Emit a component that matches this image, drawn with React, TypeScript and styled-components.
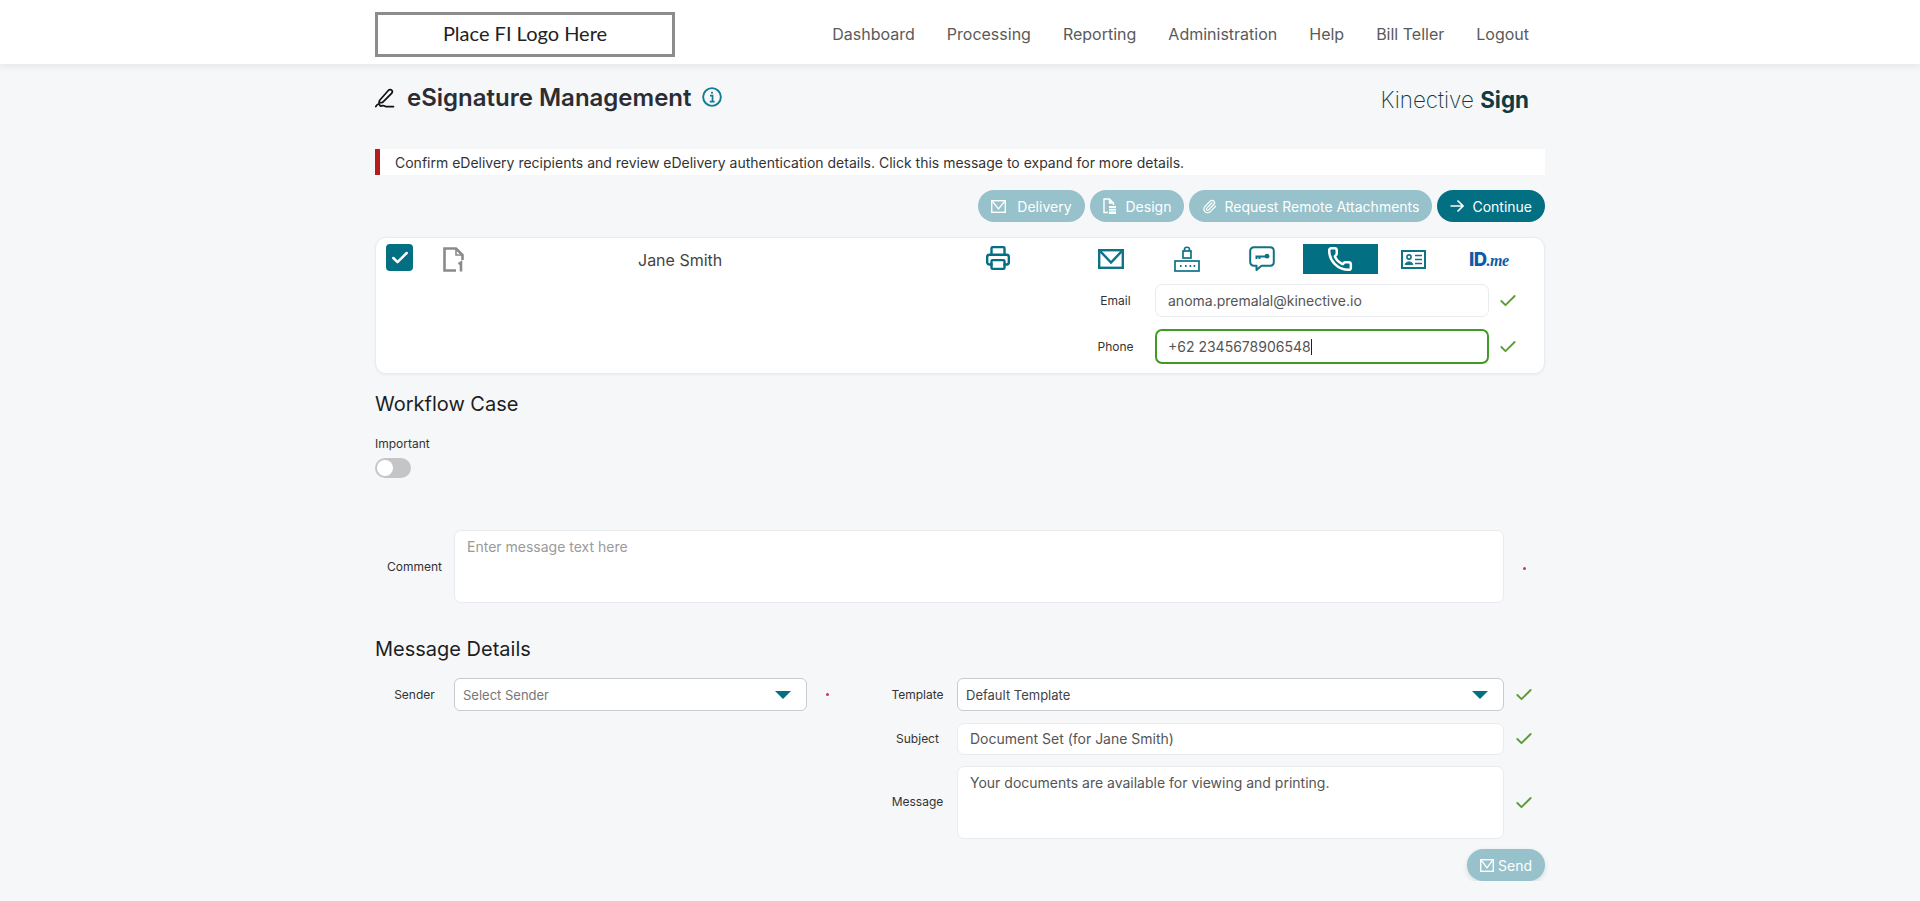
import React from "react";
import styled, { createGlobalStyle } from "styled-components";
import { Check, Paperclip, Phone, Printer } from "lucide-react";

const Global = createGlobalStyle`
  html, body { margin: 0; padding: 0; background: #f6f7f9; }
  body { font-family: Inter, "Liberation Sans", sans-serif; color: #333; overflow: hidden; }
  * { box-sizing: border-box; }
`;

const Header = styled.header`
  height: 64px;
  background: #fff;
  box-shadow: 0 2px 8px rgba(0, 0, 0, 0.08);
`;
const HeaderInner = styled.div`
  width: 1170px;
  height: 100%;
  margin: 0 auto;
  display: flex;
  align-items: center;
  justify-content: space-between;
  padding: 4px 16px 0 0;
`;
const LogoBox = styled.div`
  width: 300px;
  height: 45px;
  margin-top: 1px;
  padding-bottom: 3px;
  border: 3px solid #8c8c8c;
  display: flex;
  align-items: center;
  justify-content: center;
  font-family: Lato, Inter, sans-serif;
  font-size: 20px;
  color: #222;
`;
const Nav = styled.nav`
  display: flex;
  gap: 32px;
  font-size: 16px;
  color: #5a5a5a;
`;
const Main = styled.main`
  width: 1170px;
  margin: 0 auto;
`;
const TitleRow = styled.div`
  height: 32px;
  margin-top: 18px;
  display: flex;
  align-items: center;
  justify-content: space-between;
  padding-right: 16px;
`;
const TitleGroup = styled.div`
  display: flex;
  align-items: center;
`;
const Title = styled.h1`
  margin: 0 10px 0 12px;
  font-size: 24px;
  line-height: 32px;
  font-weight: 600;
  color: #2b2d33;
`;
const InfoSlot = styled.span`
  display: flex;
  margin-bottom: 3px;
`;
const Brand = styled.div`
  margin-top: 2px;
  font-size: 22.4px;
  font-weight: 200;
  color: #0f3b42;
  b { font-weight: 700; }
`;
const Alert = styled.div`
  height: 26px;
  margin-top: 35px;
  padding: 1px 0 0 15px;
  background: #fff;
  border-left: 5px solid #b71c1c;
  display: flex;
  align-items: center;
  font-size: 14px;
  color: #333;
`;
const Actions = styled.div`
  margin-top: 15px;
  display: flex;
  justify-content: flex-end;
  gap: 5px;
`;
const Pill = styled.button<{ $active?: boolean; $gap?: number }>`
  height: 32px;
  border: 0;
  border-radius: 16px;
  padding: 0 13px;
  display: flex;
  align-items: center;
  gap: ${(p) => p.$gap ?? 9}px;
  font-family: inherit;
  font-size: 14px;
  color: #fff;
  background: ${(p) => (p.$active ? "#026f83" : "#97c2cb")};
`;
const SendPill = styled(Pill)`
  box-shadow: 0 2px 5px rgba(0, 0, 0, 0.12);
`;
const Card = styled.section`
  margin-top: 15px;
  height: 137px;
  background: #fff;
  border: 1px solid #e9ebee;
  border-radius: 11px;
  box-shadow: 0 1px 3px rgba(0, 0, 0, 0.05);
  display: flex;
  padding: 6px 15px 0 10px;
`;
const CheckBox = styled.div`
  width: 27px;
  height: 27px;
  border-radius: 4px;
  background: #026f83;
  display: flex;
  align-items: center;
  justify-content: center;
  color: #fff;
`;
const DocSlot = styled.div`
  width: 21px;
  height: 25px;
  margin: 3px 174px 0 30px;
  flex: none;
`;
const Recipient = styled.div`
  width: 347px;
  flex: none;
  font-size: 16px;
  line-height: 32px;
  color: #444;
`;
const PrinterSlot = styled.div`
  width: 91px;
  flex: none;
  padding-top: 1px;
  color: #026f83;
`;
const Delivery = styled.div`
  width: 453px;
  flex: none;
`;
const Tabs = styled.div`
  display: grid;
  grid-template-columns: repeat(6, 1fr);
  height: 30px;
`;
const Tab = styled.div<{ $on?: boolean }>`
  display: flex;
  align-items: center;
  justify-content: center;
  padding-right: ${(p) => (p.$on ? 0 : 5)}px;
  color: ${(p) => (p.$on ? "#fff" : "#0f7386")};
  background: ${(p) => (p.$on ? "#026f83" : "transparent")};
`;
const IdMe = styled.div`
  color: #0b5ca8;
  font-size: 18.5px;
  font-weight: 800;
  letter-spacing: -0.5px;
  display: flex;
  align-items: baseline;
  i { font-family: "Liberation Serif", serif; font-weight: 700; font-size: 16px; }
`;
const DeliveryRow = styled.div<{ $top: number }>`
  display: grid;
  grid-template-columns: 79px 334px 38px;
  align-items: center;
  margin-top: ${(p) => p.$top}px;
`;
const Label = styled.div`
  font-size: 12px;
  line-height: 16px;
  text-align: center;
  color: #333;
`;
const Field = styled.div<{ $h?: number; $focus?: boolean }>`
  height: ${(p) => p.$h ?? 33}px;
  background: #fff;
  border: ${(p) => (p.$focus ? "2px solid #3f9b25" : "1px solid #e9ebee")};
  border-radius: 7px;
  padding: ${(p) => (p.$h && p.$h > 40 ? "7px 12px" : p.$focus ? "0 11px" : "0 12px")};
  display: ${(p) => (p.$h && p.$h > 40 ? "block" : "flex")};
  align-items: center;
  font-size: 14px;
  line-height: 18px;
  color: #555;
`;
const Caret = styled.span`
  display: inline-block;
  width: 1px;
  height: 16px;
  background: #222;
`;
const Placeholder = styled.span`
  color: #9a9a9a;
`;
const Mark = styled.div<{ $top?: number }>`
  display: flex;
  justify-content: center;
  margin-top: ${(p) => p.$top ?? 0}px;
  color: #5a9e2f;
`;
const Dot = styled.div<{ $top?: number }>`
  width: 3px;
  height: 3px;
  margin: ${(p) => p.$top ?? 0}px auto 0;
  border-radius: 50%;
  background: #d5324f;
`;
const SectionTitle = styled.h2<{ $top: number }>`
  margin: ${(p) => p.$top}px 0 0;
  font-size: 20px;
  line-height: 28px;
  font-weight: 400;
  color: #1c1e22;
`;
const ToggleLabel = styled.div`
  margin-top: 18px;
  font-size: 12px;
  line-height: 16px;
  color: #333;
`;
const Toggle = styled.div`
  width: 36px;
  height: 20px;
  margin-top: 6px;
  padding: 2px;
  border-radius: 10px;
  background: #c4c5c7;
  &::before {
    content: "";
    display: block;
    width: 16px;
    height: 16px;
    border-radius: 50%;
    background: #fff;
  }
`;
const CommentRow = styled.div`
  margin-top: 52px;
  display: grid;
  grid-template-columns: 79px 1050px 41px;
  align-items: center;
`;
const Details = styled.div`
  margin-top: 15px;
  display: grid;
  grid-template-columns: 503px 667px;
  align-items: start;
`;
const SenderRow = styled.div`
  display: grid;
  grid-template-columns: 79px 353px 40px;
  align-items: center;
`;
const RightStack = styled.div`
  display: flex;
  flex-direction: column;
  gap: 11.5px;
`;
const RightRow = styled.div`
  display: grid;
  grid-template-columns: 79px 547px 40px;
  align-items: center;
`;
const Select = styled.div<{ $muted?: boolean }>`
  height: 33px;
  background: #fff;
  border: 1px solid #c9cbce;
  border-radius: 6px;
  padding: 0 15px 0 8px;
  display: flex;
  align-items: center;
  justify-content: space-between;
  font-size: 13px;
  color: ${(p) => (p.$muted ? "#777" : "#444")};
`;
const Caretdown = styled.span`
  width: 0;
  height: 0;
  border-left: 8px solid transparent;
  border-right: 8px solid transparent;
  border-top: 8px solid #026f83;
`;
const SendRow = styled.div`
  margin-top: 10.5px;
  display: flex;
  justify-content: flex-end;
`;

const MailIcon = ({ size = 26, h = 20, sw = 2.4 }: { size?: number; h?: number; sw?: number }) => (
  <svg width={size} height={h} viewBox={`0 0 ${size} ${h}`} fill="none" stroke="currentColor" strokeWidth={sw}>
    <rect x={sw / 2} y={sw / 2} width={size - sw} height={h - sw} />
    <path d={`M${sw} ${sw} L${size / 2} ${h * 0.68} L${size - sw} ${sw}`} />
  </svg>
);

const PenIcon = () => (
  <svg width="20" height="20" viewBox="0 0 20 20" fill="none" stroke="#111" strokeWidth="1.7" strokeLinejoin="round" strokeLinecap="round">
    <path d="M4.5 12.5 L13.5 2.2 C14.5 1.2 16 1.4 16.8 2.3 C17.6 3.2 17.5 4.4 16.6 5.3 L7.6 14.4 L4 15 Z" />
    <path d="M0.8 18.5 C2.5 15.5 4.5 15.5 4.8 17.2 C5 18.5 6.6 18 7.8 17.6 C9 17.2 9.8 18.6 11 18.6 L18.5 18.6" />
  </svg>
);

const InfoIcon = () => (
  <svg width="20" height="20" viewBox="0 0 19 19" fill="none" stroke="#0f7c92" strokeWidth="1.8">
    <circle cx="9.5" cy="9.5" r="8.4" />
    <path d="M7.6 8.2 H10 V13.8 M7.4 13.9 H12" strokeWidth="1.6" />
    <circle cx="9.5" cy="5.4" r="1" fill="#0f7c92" stroke="none" />
  </svg>
);

const DocIcon = () => (
  <svg width="21" height="25" viewBox="0 0 21 25" fill="none" stroke="#8a8a88" strokeWidth="2.6">
    <path d="M13 23.5 H1.5 V1.5 H13 L19.5 8 V13" />
    <path d="M13 1.5 V8 H19.5" strokeWidth="1.6" />
    <path d="M15.5 17 L18 15.5 V24.5" strokeWidth="2.6" />
  </svg>
);

const DesignIcon = () => (
  <svg width="13" height="16" viewBox="0 0 13 16" fill="none" stroke="currentColor" strokeWidth="1.4">
    <path d="M5 14.5 H1 V1 H6.5 L10.5 5 V7" />
    <path d="M6.5 1 V5 H10.5" fill="currentColor" />
    <rect x="6" y="8" width="7" height="8" fill="currentColor" stroke="none" />
    <path d="M6 10.5 H13 M6 13 H13" stroke="#97c2cb" strokeWidth="0.8" />
  </svg>
);

const ArrowIcon = () => (
  <svg width="14" height="14" viewBox="0 0 14 14" fill="none" stroke="currentColor" strokeWidth="1.6">
    <path d="M0.5 7 H13 M7.5 1.5 L13 7 L7.5 12.5" />
  </svg>
);

const RouterLockIcon = () => (
  <svg width="26" height="26" viewBox="0 0 26 26" fill="none" stroke="currentColor" strokeWidth="1.7">
    <rect x="1" y="15" width="24" height="10" />
    <rect x="9" y="5" width="8" height="7" />
    <path d="M10.5 5 V3.5 C10.5 0.5 15.5 0.5 15.5 3.5 V5" />
    <path d="M6 20 h1.6 M11 20 h1.6 M15.6 20 h1.6 M19.6 20 h1.6" strokeWidth="2" />
  </svg>
);

const SmsKeyIcon = () => (
  <svg width="26" height="26" viewBox="0 0 26 26" fill="none" stroke="currentColor" strokeWidth="2">
    <path d="M5 1.2 H21 C23.2 1.2 24.8 2.8 24.8 5 V16 C24.8 18.2 23.2 19.8 21 19.8 H12.5 L7.5 24 V19.8 H5 C2.8 19.8 1.2 18.2 1.2 16 V5 C1.2 2.8 2.8 1.2 5 1.2 Z" strokeLinejoin="round" />
    <circle cx="18" cy="10.2" r="2.4" fill="currentColor" stroke="none" />
    <path d="M6.5 10.5 H16 M7.5 10.5 V13 M10.5 10.5 V13" strokeWidth="2" />
  </svg>
);

const IdCardIcon = () => (
  <svg width="25" height="19" viewBox="0 0 25 19" fill="none" stroke="currentColor" strokeWidth="2">
    <rect x="1" y="1" width="23" height="17" />
    <circle cx="8" cy="7" r="2.1" strokeWidth="1.6" />
    <path d="M4.2 14.6 C4.4 11 11.6 11 11.8 14.6 Z" fill="currentColor" strokeWidth="1" />
    <path d="M14 5.5 H21 M14 9.5 H21 M14 13.5 H21" strokeWidth="1.6" />
  </svg>
);

const Tick = () => <Check size={20} strokeWidth={2.2} />;

export default function App() {
  return (
    <>
      <Global />
      <Header>
        <HeaderInner>
          <LogoBox>Place FI Logo Here</LogoBox>
          <Nav>
            <span>Dashboard</span>
            <span>Processing</span>
            <span>Reporting</span>
            <span>Administration</span>
            <span>Help</span>
            <span>Bill Teller</span>
            <span>Logout</span>
          </Nav>
        </HeaderInner>
      </Header>
      <Main>
        <TitleRow>
          <TitleGroup>
            <PenIcon />
            <Title>eSignature Management</Title>
            <InfoSlot>
              <InfoIcon />
            </InfoSlot>
          </TitleGroup>
          <Brand>
            Kinective <b>Sign</b>
          </Brand>
        </TitleRow>
        <Alert>Confirm eDelivery recipients and review eDelivery authentication details. Click this message to expand for more details.</Alert>
        <Actions>
          <Pill $gap={11}>
            <MailIcon size={15} h={13} sw={1.4} />
            Delivery
          </Pill>
          <Pill $gap={10}>
            <DesignIcon />
            Design
          </Pill>
          <Pill $gap={7}>
            <Paperclip size={15} strokeWidth={2} />
            Request Remote Attachments
          </Pill>
          <Pill $active $gap={8}>
            <ArrowIcon />
            Continue
          </Pill>
        </Actions>
        <Card>
          <CheckBox>
            <Check size={20} strokeWidth={3} />
          </CheckBox>
          <DocSlot>
            <DocIcon />
          </DocSlot>
          <Recipient>Jane Smith</Recipient>
          <PrinterSlot>
            <Printer size={26} strokeWidth={2.2} />
          </PrinterSlot>
          <Delivery>
            <Tabs>
              <Tab>
                <MailIcon />
              </Tab>
              <Tab>
                <RouterLockIcon />
              </Tab>
              <Tab>
                <SmsKeyIcon />
              </Tab>
              <Tab $on>
                <Phone size={26} strokeWidth={2.3} />
              </Tab>
              <Tab>
                <IdCardIcon />
              </Tab>
              <Tab>
                <IdMe>
                  ID<i>.me</i>
                </IdMe>
              </Tab>
            </Tabs>
            <DeliveryRow $top={10}>
              <Label>Email</Label>
              <Field>anoma.premalal@kinective.io</Field>
              <Mark>
                <Tick />
              </Mark>
            </DeliveryRow>
            <DeliveryRow $top={12}>
              <Label>Phone</Label>
              <Field $h={35} $focus>
                +62 2345678906548
                <Caret />
              </Field>
              <Mark>
                <Tick />
              </Mark>
            </DeliveryRow>
          </Delivery>
        </Card>
        <SectionTitle $top={16}>Workflow Case</SectionTitle>
        <ToggleLabel>Important</ToggleLabel>
        <Toggle />
        <CommentRow>
          <Label>Comment</Label>
          <Field $h={73}>
            <Placeholder>Enter message text here</Placeholder>
          </Field>
          <Dot $top={3} />
        </CommentRow>
        <SectionTitle $top={32}>Message Details</SectionTitle>
        <Details>
          <SenderRow>
            <Label>Sender</Label>
            <Select $muted>
              Select Sender
              <Caretdown />
            </Select>
            <Dot />
          </SenderRow>
          <RightStack>
            <RightRow>
              <Label>Template</Label>
              <Select>
                Default Template
                <Caretdown />
              </Select>
              <Mark>
                <Tick />
              </Mark>
            </RightRow>
            <RightRow>
              <Label>Subject</Label>
              <Field $h={32}>Document Set (for Jane Smith)</Field>
              <Mark>
                <Tick />
              </Mark>
            </RightRow>
            <RightRow>
              <Label>Message</Label>
              <Field $h={72.5}>Your documents are available for viewing and printing.</Field>
              <Mark $top={2}>
                <Tick />
              </Mark>
            </RightRow>
          </RightStack>
        </Details>
        <SendRow>
          <SendPill $gap={4}>
            <MailIcon size={14} h={13} sw={1.4} />
            Send
          </SendPill>
        </SendRow>
      </Main>
    </>
  );
}
